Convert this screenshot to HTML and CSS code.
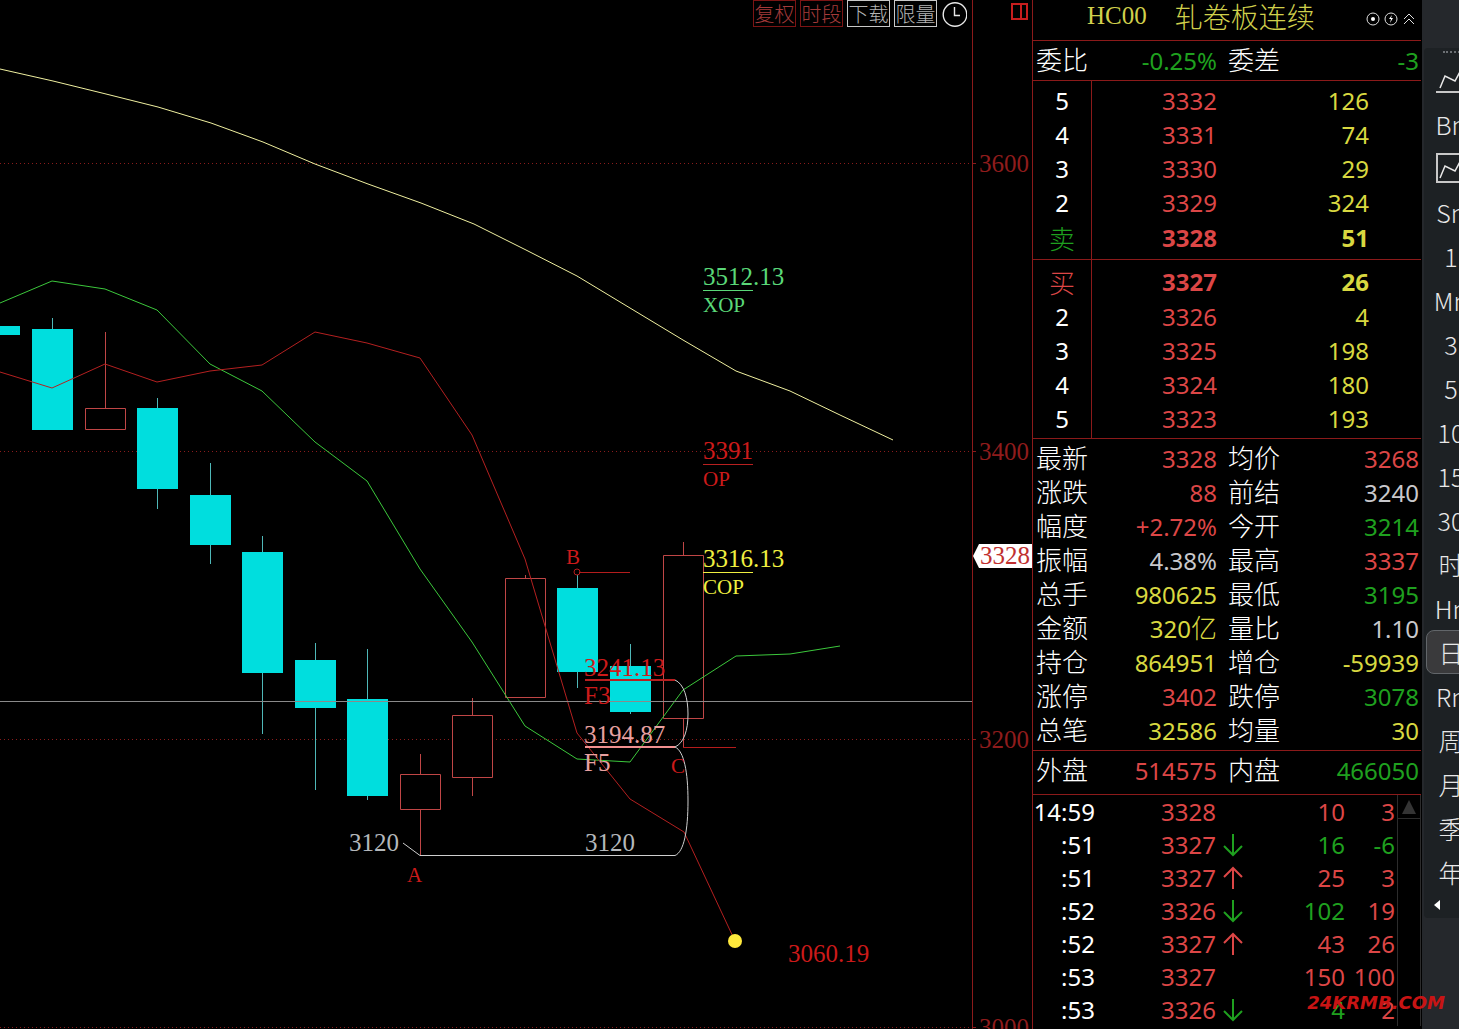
FILE: index.html
```html
<!DOCTYPE html>
<html lang="zh-CN">
<head>
<meta charset="utf-8">
<meta name="viewport" content="width=device-width, initial-scale=1">
<title>HC00 轧卷板连续</title>
<link rel="stylesheet" href="styles.css">
</head>
<body>
<main class="terminal">
  <section class="chart" aria-label="K线图">
    <svg class="plot" viewBox="0 0 1032 1029">
      <g class="grid">
        <path d="M0 163.500H972M0 451.500H972M0 739.500H972M0 1027.500H972"/>
      </g>
      <path class="frame" d="M972.500 0V1029M972 163.500h4M972 451.500h4M972 739.500h4M972 1027.500h4"/>

      <!-- candles: wicks first, bodies on top -->
      <path class="wick-down" d="M52.500 318V330M157.500 398V509M210.500 463V564M262.500 536V734M315.500 643V790M367.500 649V800M577.500 575V688M630.500 644V714"/>
      <path class="body-down" d="M0 326h20v9H0zM32 329h41v101H32zM137 408h41v81h-41zM190 495h41v50h-41zM242 552h41v121h-41zM295 660h41v48h-41zM347 699h41v97h-41zM557 588h41v84h-41zM610 666h41v46h-41z"/>
      <path class="wick-up" d="M105.500 332V408M420.500 754V774M420.500 810V855M472.500 698V715M472.500 778V796M525.500 575V578M683.500 542V555M683.500 719V747"/>
      <path class="body-up" d="M85.500 408.500h40v21h-40zM400.500 774.500h40v35h-40zM452.500 715.500h40v62h-40zM505.500 578.500h40v119h-40zM663.500 555.500h40v163h-40z"/>

      <polyline class="ma ma-long" points="0,69 53,81 106,94 158,107 211,123 263,142 315,164 368,184 421,203 474,224 526,250 577,276 630,308 683,340 736,371 790,391 840,415 893,440"/>
      <polyline class="ma ma-mid" points="0,303 52,281 105,289 157,310 210,364 262,391 315,442 367,481 420,569 472,642 525,726 577,759 630,762 683,690 736,656 790,654 840,646"/>
      <polyline class="ma ma-short" points="0,372 52,388 105,364 157,382 210,371 262,365 315,332 367,343 420,358 472,435 525,559 577,733 630,799 684,832 735,941"/>

      <path class="level" d="M0 701.500H972"/>
      <path class="swing" d="M579 572.500H630M683 747.500H736"/>
      <circle class="swing" cx="577" cy="572" r="3"/>
      <path class="brace" d="M675 680C684 684 688 698 688 714S684 743 675 747C684 751 688 772 688 801S684 852 675 855.500H420L403 843"/>
      <circle class="target" cx="735" cy="941" r="7"/>

      <g class="num">
        <text class="green" x="703" y="285">3512.13</text>
        <text class="red" x="703" y="459">3391</text>
        <text class="yellow" x="703" y="567">3316.13</text>
        <text class="red" x="584" y="676">3241.13</text>
        <text class="red" x="584" y="704">F3</text>
        <text class="pink" x="584" y="743">3194.87</text>
        <text class="pink" x="584" y="771">F5</text>
        <text class="grey" x="349" y="851">3120</text>
        <text class="grey" x="585" y="851">3120</text>
        <text class="red" x="788" y="962">3060.19</text>
        <text class="tick" x="979" y="172">3600</text>
        <text class="tick" x="979" y="460">3400</text>
        <text class="tick" x="979" y="748">3200</text>
        <text class="tick" x="979" y="1036">3000</text>
      </g>
      <g class="tag">
        <text class="green" x="703" y="312">XOP</text>
        <text class="red" x="703" y="486">OP</text>
        <text class="yellow" x="703" y="594">COP</text>
        <text class="red" x="566" y="564">B</text>
        <text class="red" x="671" y="773">C</text>
        <text class="red" x="407" y="882">A</text>
      </g>
      <path class="rule green" d="M703 290.500h50"/>
      <path class="rule red" d="M703 464.500h50"/>
      <path class="rule yellow" d="M703 572.500h50"/>
      <path class="rule thick red" d="M585 680h90"/>
      <path class="rule thick pink" d="M585 747h90"/>

      <path class="price-flag" d="M973 556L979 544H1032V568H979z"/>
      <g class="num"><text class="flag-text" x="980" y="564">3328</text></g>
      <path class="split-icon" d="M1012 4h15v15h-15zM1021 4v15"/>
    </svg>
    <div class="chart-tools">
      <button class="tool red-tool" type="button">复权</button>
      <button class="tool red-tool" type="button">时段</button>
      <button class="tool" type="button">下载</button>
      <button class="tool" type="button">限量</button>
      <button class="clock" type="button" aria-label="时间">
        <svg width="26" height="26" viewBox="0 0 26 26"><circle cx="14" cy="13.500" r="11.800"/><path d="M13.500 6V14.500H19"/></svg>
      </button>
    </div>
  </section>

  <section class="quote" aria-label="盘口">
    <header class="title">
      <h1><span class="code">HC00</span><span>轧卷板连续</span></h1>
      <svg class="title-icons" width="50" height="16" viewBox="0 0 50 16">
        <circle cx="8" cy="8" r="6"/><circle class="dot" cx="8" cy="8" r="2"/>
        <circle cx="26" cy="8" r="6"/><path class="dot" d="M27 4l-3 4h2l-1 4 3-5h-2z"/>
        <path d="M39 8l5-5 5 5M39 13l5-5 5 5"/>
      </svg>
    </header>

    <table class="stats ratio">
      <colgroup><col class="c-label"><col class="c-value"><col class="c-label2"><col></colgroup>
      <tr><th>委比</th><td class="dn">-0.25%</td><th>委差</th><td class="dn">-3</td></tr>
    </table>

    <table class="depth asks">
      <colgroup><col class="d-level"><col class="d-price"><col></colgroup>
      <tr><th>5</th><td>3332</td><td>126</td></tr>
      <tr><th>4</th><td>3331</td><td>74</td></tr>
      <tr><th>3</th><td>3330</td><td>29</td></tr>
      <tr><th>2</th><td>3329</td><td>324</td></tr>
      <tr class="best"><th class="dn">卖</th><td>3328</td><td>51</td></tr>
    </table>
    <table class="depth bids">
      <colgroup><col class="d-level"><col class="d-price"><col></colgroup>
      <tr class="best"><th class="up">买</th><td>3327</td><td>26</td></tr>
      <tr><th>2</th><td>3326</td><td>4</td></tr>
      <tr><th>3</th><td>3325</td><td>198</td></tr>
      <tr><th>4</th><td>3324</td><td>180</td></tr>
      <tr><th>5</th><td>3323</td><td>193</td></tr>
    </table>

    <table class="stats detail">
      <colgroup><col class="c-label"><col class="c-value"><col class="c-label2"><col></colgroup>
      <tr><th>最新</th><td class="up">3328</td><th>均价</th><td class="up">3268</td></tr>
      <tr><th>涨跌</th><td class="up">88</td><th>前结</th><td class="flat">3240</td></tr>
      <tr><th>幅度</th><td class="up">+2.72%</td><th>今开</th><td class="dn">3214</td></tr>
      <tr><th>振幅</th><td class="flat">4.38%</td><th>最高</th><td class="up">3337</td></tr>
      <tr><th>总手</th><td class="vol">980625</td><th>最低</th><td class="dn">3195</td></tr>
      <tr><th>金额</th><td class="vol">320<span class="unit">亿</span></td><th>量比</th><td class="flat">1.10</td></tr>
      <tr><th>持仓</th><td class="vol">864951</td><th>增仓</th><td class="vol">-59939</td></tr>
      <tr><th>涨停</th><td class="up">3402</td><th>跌停</th><td class="dn">3078</td></tr>
      <tr><th>总笔</th><td class="vol">32586</td><th>均量</th><td class="vol">30</td></tr>
    </table>

    <table class="stats inout">
      <colgroup><col class="c-label"><col class="c-value"><col class="c-label2"><col></colgroup>
      <tr><th>外盘</th><td class="up">514575</td><th>内盘</th><td class="dn">466050</td></tr>
    </table>

    <div class="trades">
      <table class="ticks">
        <colgroup><col class="t-time"><col class="t-price"><col class="t-arrow"><col class="t-vol"><col></colgroup>
        <tr><th>14:59</th><td class="up">3328</td><td></td><td class="up">10</td><td class="up">3</td></tr>
        <tr><th>:51</th><td class="up">3327</td><td class="dn"><svg class="arrow" width="20" height="24" viewBox="0 0 20 24"><path d="M10 1V22M1 13l9 9 9-9"/></svg></td><td class="dn">16</td><td class="dn">-6</td></tr>
        <tr><th>:51</th><td class="up">3327</td><td class="up"><svg class="arrow" width="20" height="24" viewBox="0 0 20 24"><path d="M10 23V2M1 11l9-9 9 9"/></svg></td><td class="up">25</td><td class="up">3</td></tr>
        <tr><th>:52</th><td class="up">3326</td><td class="dn"><svg class="arrow" width="20" height="24" viewBox="0 0 20 24"><path d="M10 1V22M1 13l9 9 9-9"/></svg></td><td class="dn">102</td><td class="up">19</td></tr>
        <tr><th>:52</th><td class="up">3327</td><td class="up"><svg class="arrow" width="20" height="24" viewBox="0 0 20 24"><path d="M10 23V2M1 11l9-9 9 9"/></svg></td><td class="up">43</td><td class="up">26</td></tr>
        <tr><th>:53</th><td class="up">3327</td><td></td><td class="up">150</td><td class="up">100</td></tr>
        <tr><th>:53</th><td class="up">3326</td><td class="dn"><svg class="arrow" width="20" height="24" viewBox="0 0 20 24"><path d="M10 1V22M1 13l9 9 9-9"/></svg></td><td class="dn">4</td><td class="up">2</td></tr>
      </table>
      <div class="scrollbar">
        <button class="scroll-up" type="button" aria-label="向上"><svg width="14" height="14" viewBox="0 0 14 14"><path d="M7 0l7 14H0z"/></svg></button>
      </div>
    </div>
  </section>

  <aside class="side">
    <nav class="periods" aria-label="周期">
      <span class="grip"></span>
      <button type="button" aria-label="分时"><svg width="32" height="32" viewBox="0 0 32 32"><path class="trend" d="M5 24l5-12 10 5 7-13"/><path class="heavy" d="M1 28h31"/></svg></button>
      <button type="button">Bn</button>
      <button type="button" aria-label="走势"><svg width="32" height="32" viewBox="0 0 32 32"><path class="trend" d="M5 26l5-12 10 5 7-13"/><path class="heavy" d="M2 2h29v28h-29z"/></svg></button>
      <button type="button">Sn</button>
      <button type="button">1</button>
      <button type="button">Mn</button>
      <button type="button">3</button>
      <button type="button">5</button>
      <button type="button">10</button>
      <button type="button">15</button>
      <button type="button">30</button>
      <button type="button">时</button>
      <button type="button">Hn</button>
      <button type="button" class="active" aria-pressed="true">日</button>
      <button type="button">Rn</button>
      <button type="button">周</button>
      <button type="button">月</button>
      <button type="button">季</button>
      <button type="button">年</button>
      <button type="button" class="collapse" aria-label="收起"><svg width="6" height="10" viewBox="0 0 6 10"><path class="solid" d="M6 0v10L0 5z"/></svg></button>
    </nav>
  </aside>
  <span class="watermark">24KRMB.COM</span>
</main>
</body>
</html>
```
FILE: styles.css
```css
:root {
  --line: #8b1a1a;
  --up: #dc4646;
  --down: #1fa01f;
  --vol: #d8d840;
  --cjk: "Noto Sans CJK SC", sans-serif;
  --digits: "Noto Sans", "Open Sans", "Noto Sans CJK SC", sans-serif;
}

* { box-sizing: border-box; }

body {
  margin: 0;
  background: #000;
  color: #fff;
  font-family: var(--digits);
  font-size: 24px;
  overflow: hidden;
}

button {
  margin: 0;
  padding: 0;
  border: 0;
  background: none;
  color: inherit;
  font: inherit;
}

.terminal {
  position: relative;
  display: grid;
  grid-template-columns: minmax(0, 1fr) 390px 37px;
  height: 100vh;
}

/* chart */
.chart { position: relative; overflow: hidden; }
.plot { display: block; width: 100%; }
.plot path, .plot polyline, .plot circle { fill: none; stroke-width: 1; }
.plot .grid path { stroke: #8a1c1c; stroke-dasharray: 1 3; }
.plot .frame { stroke: var(--line); }
.plot .wick-down { stroke: #4fb8b8; }
.plot .body-down { fill: #00dede; }
.plot .wick-up, .plot .body-up { stroke: #c04646; }
.plot .body-up { fill: #000; }
.plot .ma-long { stroke: #f0f0a0; }
.plot .ma-mid { stroke: #3cc83c; }
.plot .ma-short { stroke: #b42020; }
.plot .level { stroke: #8a8a8a; }
.plot .swing { stroke: #b41c1c; }
.plot .brace { stroke: #cfcfcf; }
.plot .target { fill: #ffe93c; }
.plot .price-flag { fill: #fff; }
.plot .split-icon { stroke: #c81e1e; stroke-width: 2; }
.num text { font: 25px "Liberation Serif", serif; }
.tag text { font: 21px "Liberation Serif", serif; }
text.green { fill: #5ad878; }
text.red { fill: #cc1a1a; }
text.yellow { fill: #f0f040; }
text.pink { fill: #e8a0a0; }
text.grey { fill: #b4b8bc; }
text.tick { fill: #8f1c1c; }
text.flag-text { fill: #c03030; }
.plot .rule.green { stroke: #5ad878; }
.plot .rule.red { stroke: #b82020; }
.plot .rule.yellow { stroke: #f0f040; }
.plot .rule.pink { stroke: #f09090; }
.plot .rule.thick { stroke-width: 2; }

.chart-tools {
  position: absolute;
  top: 0;
  right: 64px;
  display: flex;
  gap: 4px;
}
.tool {
  width: 43px;
  height: 27px;
  border: 1px solid #c8c8c8;
  color: #b4b4b4;
  font: 300 20px/24px var(--cjk);
  white-space: nowrap;
}
.red-tool { border-color: #7c1414; color: #a43a3a; }
.clock { width: 27px; height: 27px; }
.clock svg { display: block; fill: none; stroke: #e8e8e8; stroke-width: 1.4; }

/* quote panel */
.quote {
  border-left: 1px solid var(--line);
  border-right: 1px solid #000;
  overflow: hidden;
}
.title {
  display: flex;
  align-items: center;
  justify-content: space-between;
  height: 41px;
  padding: 0 6px 8px 54px;
  border-bottom: 1px solid var(--line);
}
h1 {
  display: flex;
  gap: 28px;
  align-items: center;
  margin: 0;
  color: #d0d04c;
  font: 300 28px/32px var(--cjk);
}
.code { font: 25px/32px "Liberation Serif", serif; }
.title-icons { fill: none; stroke: #e0e0e0; margin-top: 5px; }
.title-icons .dot { fill: #fff; stroke: none; }

table {
  width: 100%;
  border-collapse: separate;
  border-spacing: 0;
  table-layout: fixed;
}
th, td {
  height: 34px;
  padding: 0;
  line-height: 34px;
  font-weight: 400;
  text-align: right;
  white-space: nowrap;
}
.up { color: var(--up); }
.dn { color: var(--down); }
.vol { color: var(--vol); }
.flat { color: #c8c8cc; }

.stats { border-bottom: 1px solid var(--line); }
.stats th, .stats td { vertical-align: top; }
.stats th {
  padding-left: 3px;
  font: 300 26px/30px var(--cjk);
  text-align: left;
}
.stats th + td + th { padding-left: 11px; }
.stats td:last-child { padding-right: 2px; }
.unit { font: 300 26px/30px var(--cjk); }
.c-label { width: 60px; }
.c-value { width: 124px; }
.c-label2 { width: 74px; }
.ratio { padding: 3px 0 2px; }
.detail { padding: 3px 0 2px; }
.inout { padding: 3px 0 6px; }

.depth { border-bottom: 1px solid var(--line); }
.d-level { width: 59px; }
.d-price { width: 125px; }
.depth th { border-right: 1px solid var(--line); text-align: center; }
.depth td { color: var(--up); }
.depth td:last-child { padding-right: 52px; color: var(--vol); }
.depth .best th { font: 300 26px/34px var(--cjk); }
.best td { height: 36px; line-height: 36px; font-weight: 700; }
.asks tr:first-child > * { height: 37px; padding-top: 3px; }
.asks .best > * { height: 39px; padding-bottom: 3px; }
.bids .best > * { height: 40px; padding-top: 4px; }
.bids tr:last-child > * { height: 36px; padding-bottom: 2px; }

.trades { display: flex; }
.ticks { flex: 1; width: auto; }
.ticks th, .ticks td { height: 33px; line-height: 33px; }
.ticks td:last-child { padding-right: 2px; }
.t-time { width: 62px; }
.t-price { width: 121px; }
.t-arrow { width: 34px; }
.t-vol { width: 95px; }
.arrow {
  display: block;
  margin: 0 7px;
  fill: none;
  stroke: currentColor;
  stroke-width: 2;
}
.scrollbar {
  width: 24px;
  border: 1px solid #2c2c2c;
  border-width: 0 1px;
}
.scroll-up {
  display: grid;
  place-items: center;
  width: 100%;
  height: 24px;
  border-bottom: 1px solid #2c2c2c;
}
.scroll-up svg { fill: #343434; }

/* period bar, runs past the right edge of the window */
.side { padding: 48px 0 0 2px; background: #25282c; overflow: hidden; }
.periods {
  display: flex;
  flex-direction: column;
  width: 54px;
  padding: 0 2px 2px;
  border-radius: 4px;
  background: #1d2124;
}
.grip {
  height: 7px;
  margin: 3px 0 0 17px;
  border-top: 2px dotted #6c7074;
}
.periods button {
  height: 44px;
  border: 1px solid transparent;
  border-radius: 8px;
  color: #e8e8e8;
  font: 300 25px/38px var(--cjk);
}
.periods button svg { display: block; margin: 0 auto; fill: none; stroke: #e8e8e8; }
.periods svg .trend { stroke-width: 1.5; }
.periods svg .heavy { stroke: #c8c8c8; stroke-width: 2; }
.periods svg .solid { fill: #fff; stroke: none; }
.periods .active { border-color: #62666a; background: #3a3a3c; }
.periods .collapse { height: 22px; }
.periods .collapse svg { margin: 0 7px; }

.watermark {
  position: absolute;
  right: 14px;
  bottom: 16px;
  color: #c81414;
  font: italic 700 18px/20px "DejaVu Sans", sans-serif;
}
```
